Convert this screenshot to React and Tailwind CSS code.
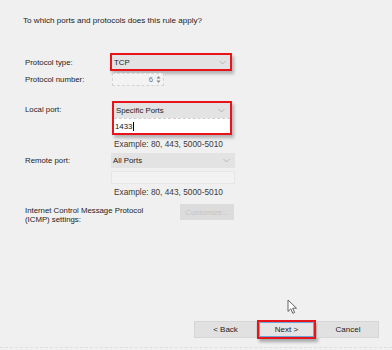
import React from 'react';

function Chevron() {
  return (
    <svg width="7" height="5" viewBox="0 0 7 5" className="shrink-0">
      <path d="M0.5 1 L3.5 4 L6.5 1" fill="none" stroke="#acacac" strokeWidth="0.8" />
    </svg>
  );
}

function Dropdown({ value }) {
  return (
    <div className="flex h-[15px] items-center justify-between bg-[#e3e3e3] pl-[2px] pr-[5px] text-[#222]">
      <span>{value}</span>
      <Chevron />
    </div>
  );
}

export default function App() {
  return (
    <div
      className="relative h-[350px] w-[392px] overflow-hidden bg-[#f0f0f0] text-[7.8px] leading-[9px] text-[#1c1c1c]"
      style={{ fontFamily: '"Liberation Sans", Arial, sans-serif' }}
    >
      {/* Header */}
      <div className="pl-[23px] pt-[16px] text-[8.1px]">To which ports and protocols does this rule apply?</div>

      <div className="mt-[28px] pl-[25px]">
        {/* Protocol type */}
        <div className="flex items-center">
          <div className="w-[85px]">Protocol type:</div>
          <div className="w-[122px] border-2 border-[#e8141c] shadow-[2px_3px_3px_rgba(0,0,0,0.25)]">
            <div className="flex h-[14px] items-center justify-between bg-[#e3e3e3] pl-[2px] pr-[4px]">
              <span>TCP</span>
              <Chevron />
            </div>
          </div>
        </div>

        {/* Protocol number */}
        <div className="mt-[2px] flex items-center">
          <div className="w-[87px]">Protocol number:</div>
          <div className="flex h-[13px] w-[52px] items-center justify-end gap-[3px] border border-dashed border-[#d4d4d4] bg-[#f3f3f3] pr-[2px] text-[#777]">
            <span>6</span>
            <svg width="5" height="9" viewBox="0 0 5 9">
              <path d="M0.5 3.5 L2.5 1 L4.5 3.5 Z M0.5 5.5 L2.5 8 L4.5 5.5 Z" fill="#888" />
            </svg>
          </div>
        </div>

        {/* Local port */}
        <div className="mt-[15px] flex items-start">
          <div className="w-[87px] pt-[4px]">Local port:</div>
          <div>
            <div className="w-[120px] border-2 border-[#e8141c] shadow-[2px_3px_3px_rgba(0,0,0,0.25)]">
              <Dropdown value="Specific Ports" />
              <div className="flex h-[15px] items-center border-t border-dashed border-[#cfcfcf] bg-white pl-[1px] text-[#111]">
                1433<span className="ml-px inline-block h-[9px] w-px bg-black" />
              </div>
            </div>
            <div className="mt-[4px] pl-[2px] text-[8.3px] leading-[10px] text-[#3a3a3a]">Example: 80, 443, 5000-5010</div>
          </div>
        </div>

        {/* Remote port */}
        <div className="mt-[4px] flex items-start">
          <div className="w-[86px] pt-[3px]">Remote port:</div>
          <div className="w-[124px]">
            <Dropdown value="All Ports" />
            <div className="mt-[3px] h-[13px] border border-[#e6e6e6] bg-[#f2f2f2]" />
            <div className="mt-[3px] pl-[3px] text-[8.3px] leading-[10px] text-[#3a3a3a]">Example: 80, 443, 5000-5010</div>
          </div>
        </div>

        {/* ICMP */}
        <div className="mt-[7px] flex items-start">
          <div className="w-[155px] pt-[2px]">
            Internet Control Message Protocol
            <br />
            (ICMP) settings:
          </div>
          <div className="flex h-[16px] w-[54px] items-center justify-center bg-[#dcdcdc] text-[#c4c4c4]">
            Customize...
          </div>
        </div>
      </div>

      {/* Cursor */}
      <svg className="absolute left-[287px] top-[299px]" width="11" height="16" viewBox="0 0 11 16">
        <path d="M1 1 L1 12.5 L3.8 9.8 L5.8 14.3 L7.6 13.5 L5.7 9.2 L9.5 9.2 Z" fill="#fff" stroke="#555" strokeWidth="0.9" strokeLinejoin="round" />
      </svg>

      {/* Buttons */}
      <div className="absolute left-[194px] top-[320px] flex items-center text-[8px]">
        <div className="flex h-[17px] w-[63px] items-center justify-center border border-[#d6d6d6] bg-[#e1e1e1] text-[#222]">
          &lt; Back
        </div>
        <div className="h-[19px] w-[59px] border-2 border-[#e8141c] shadow-[2px_3px_3px_rgba(0,0,0,0.3)]">
          <div className="flex h-full items-center justify-center border border-[#6aa6da] bg-[#e5e5e5] text-[#222]">
            Next &gt;
          </div>
        </div>
        <div className="ml-px flex h-[17px] w-[62px] items-center justify-center border border-[#d6d6d6] bg-[#e1e1e1] text-[#222]">
          Cancel
        </div>
      </div>

      <div className="absolute bottom-[2px] left-0 w-full border-t border-dashed border-[#dedede]" />
    </div>
  );
}
